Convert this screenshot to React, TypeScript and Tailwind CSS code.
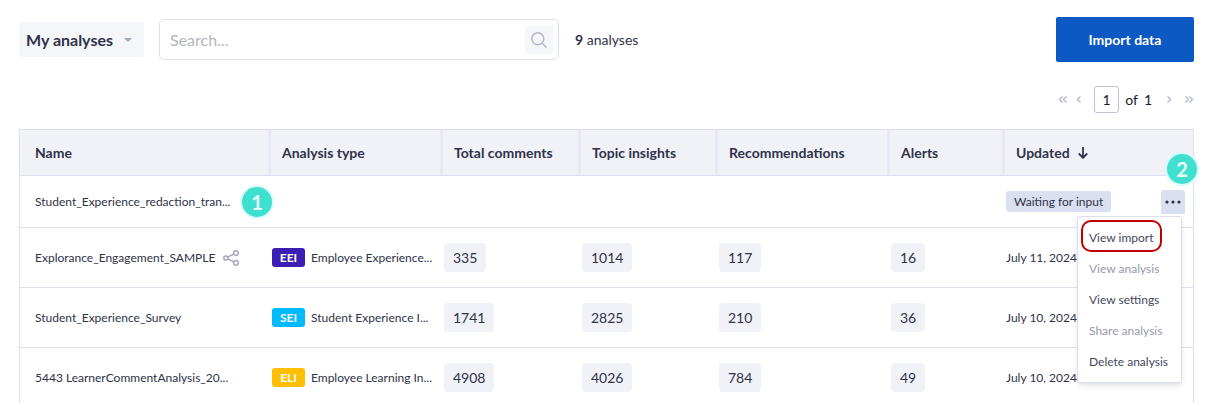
import type { ReactNode } from "react";

type Analysis = {
  name: string;
  shared?: boolean;
  type: { code: string; label: string; color: string };
  counts: number[];
  updated: string;
};

const analyses: Analysis[] = [
  {
    name: "Explorance_Engagement_SAMPLE",
    shared: true,
    type: {
      code: "EEI",
      label: "Employee Experience...",
      color: "bg-[#3b1fb5]",
    },
    counts: [335, 1014, 117, 16],
    updated: "July 11, 2024",
  },
  {
    name: "Student_Experience_Survey",
    type: {
      code: "SEI",
      label: "Student Experience I...",
      color: "bg-[#00baff]",
    },
    counts: [1741, 2825, 210, 36],
    updated: "July 10, 2024",
  },
  {
    name: "5443 LearnerCommentAnalysis_20...",
    type: {
      code: "ELI",
      label: "Employee Learning In...",
      color: "bg-[#ffbe00]",
    },
    counts: [4908, 4026, 784, 49],
    updated: "July 10, 2024",
  },
];

const columns = [
  { title: "Name", width: "w-[252px]" },
  { title: "Analysis type", width: "w-[172px]" },
  { title: "Total comments", width: "w-[138px]" },
  { title: "Topic insights", width: "w-[137px]" },
  { title: "Recommendations", width: "w-[172px]" },
  { title: "Alerts", width: "w-[115px]" },
  { title: "Updated", width: "w-[187px]" },
];

const menuItems = [
  { label: "View import", disabled: false, highlighted: true },
  { label: "View analysis", disabled: true },
  { label: "View settings", disabled: false },
  { label: "Share analysis", disabled: true },
  { label: "Delete analysis", disabled: false },
];

export default function App() {
  return (
    <main className="h-screen overflow-hidden bg-white pt-[17px] pr-[18px] pl-[19px] font-['Lato','Liberation_Sans',sans-serif] text-[#2f3249]">
      <Toolbar />
      <Pagination />
      <AnalysesTable />
    </main>
  );
}

function Toolbar() {
  return (
    <header className="flex items-center">
      <div className="relative">
        <select
          aria-label="Analyses filter"
          className="h-[35px] w-[125px] appearance-none rounded-xs bg-[#f5f6fa] pl-[7px] text-base font-bold"
        >
          <option>My analyses</option>
        </select>
        <svg
          viewBox="0 0 8 4"
          className="pointer-events-none absolute top-4 right-3 h-1 w-2 fill-[#a3a7bd]"
        >
          <path d="M0 0h8L4 4z" />
        </svg>
      </div>

      <form
        role="search"
        className="ml-[15px] flex h-[41px] w-[400px] items-center rounded-[5px] border border-[#dcdff0] pr-[5px] pl-2.5"
      >
        <input
          type="text"
          aria-label="Search analyses"
          placeholder="Search..."
          className="min-w-0 flex-1 text-base outline-none placeholder:text-[#b3b5ba]"
        />
        <button
          type="button"
          aria-label="Search"
          className="flex size-7 items-center justify-center rounded-xs bg-[#f5f6fa]"
        >
          <svg
            viewBox="0 0 16 16"
            className="size-4 fill-none stroke-[#b4b7c6] stroke-[1.5]"
          >
            <circle cx="6.8" cy="6.8" r="6" />
            <path d="M11 11l4.5 4.5" />
          </svg>
        </button>
      </form>

      <p className="ml-4 text-sm">
        <b>9</b> analyses
      </p>

      <button
        type="button"
        className="ml-auto h-[45px] w-[138px] rounded-xs bg-[#0c59c4] text-sm font-bold text-white"
      >
        Import data
      </button>
    </header>
  );
}

function Pagination() {
  return (
    <nav
      aria-label="Pagination"
      className="mt-6 flex items-center justify-end text-sm text-[#16182b]"
    >
      <PageButton
        label="First page"
        path="M4.5 1.5L1.5 4.5L4.5 7.5M8.5 1.5L5.5 4.5L8.5 7.5"
      />
      <PageButton
        label="Previous page"
        path="M4.5 1.5L1.5 4.5L4.5 7.5"
        className="ml-2"
      />
      <input
        aria-label="Page"
        defaultValue="1"
        className="ml-2 h-[27px] w-[25px] rounded-[3px] border border-[#bfc2cf] text-center text-sm"
      />
      <span className="ml-1.5">of</span>
      <span className="ml-1.5">1</span>
      <PageButton
        label="Next page"
        path="M1.5 1.5L4.5 4.5L1.5 7.5"
        className="ml-3.5"
      />
      <PageButton
        label="Last page"
        path="M1.5 1.5L4.5 4.5L1.5 7.5M5.5 1.5L8.5 4.5L5.5 7.5"
        className="ml-2"
      />
    </nav>
  );
}

type PageButtonProps = {
  label: string;
  path: string;
  className?: string;
};

function PageButton({ label, path, className = "" }: PageButtonProps) {
  return (
    <button type="button" aria-label={label} className={className}>
      <svg
        viewBox="0 0 10 9"
        className="h-[9px] w-2.5 fill-none stroke-[#b1b4cb] stroke-[1.3]"
      >
        <path d={path} />
      </svg>
    </button>
  );
}

function AnalysesTable() {
  return (
    <div className="mt-4 border border-[#dcdff0]">
      <table className="w-full table-fixed border-separate border-spacing-0 text-left">
        <thead>
          <tr>
            {columns.map((column, index) => (
              <th
                key={column.title}
                className={`h-[46px] border-b border-[#dcdff0] bg-[#f1f2f8] p-0 text-sm font-bold ${column.width}`}
              >
                <div
                  className={`flex h-[45px] items-center ${
                    index === 0 ? "pl-[15px]" : "pl-2.5"
                  } ${
                    index < columns.length - 1
                      ? "mr-px border-r-3 border-[#e5eaf5]"
                      : ""
                  }`}
                >
                  {column.title}
                  {column.title === "Updated" && <SortArrow />}
                </div>
              </th>
            ))}
          </tr>
        </thead>
        <tbody>
          <PendingRow />
          {analyses.map((analysis) => (
            <AnalysisRow key={analysis.name} analysis={analysis} />
          ))}
        </tbody>
      </table>
    </div>
  );
}

function SortArrow() {
  return (
    <svg
      viewBox="0 0 10 12"
      className="ml-2 h-3 w-2.5 fill-none stroke-current stroke-[1.8]"
    >
      <path d="M5 0v11M0.8 6.5L5 10.8L9.2 6.5" />
    </svg>
  );
}

const cell = "border-b border-[#dcdff0] p-0 text-xs";

function PendingRow() {
  return (
    <tr>
      <td className={`relative h-13 pl-[15px] ${cell}`}>
        Student_Experience_redaction_tran...
        <StepMarker className="top-[11px] right-0">1</StepMarker>
      </td>
      <td className={cell} />
      <td className={cell} />
      <td className={cell} />
      <td className={cell} />
      <td className={cell} />
      <td className={`relative ${cell}`}>
        <div className="flex items-center justify-between pr-2">
          <span className="rounded-[3px] bg-[#dbe0f0] px-2 leading-[21px]">
            Waiting for input
          </span>
          <button
            type="button"
            aria-label="More actions"
            className="flex size-6 items-center justify-center rounded-xs bg-[#dbe0f0]"
          >
            <svg viewBox="0 0 16 4" className="h-1 w-4 fill-[#2f3249]">
              <circle cx="2" cy="2" r="1.6" />
              <circle cx="8" cy="2" r="1.6" />
              <circle cx="14" cy="2" r="1.6" />
            </svg>
          </button>
        </div>
        <StepMarker className="-top-[22px] -right-1">2</StepMarker>
        <ActionMenu />
      </td>
    </tr>
  );
}

function AnalysisRow({ analysis }: { analysis: Analysis }) {
  const { name, shared, type, counts, updated } = analysis;

  return (
    <tr>
      <td className={`h-15 pl-[15px] ${cell}`}>
        <div className="flex items-center gap-2">
          {name}
          {shared && <ShareIcon />}
        </div>
      </td>
      <td className={cell}>
        <div className="flex items-center gap-1.5 whitespace-nowrap">
          <span
            className={`w-[33px] rounded-[3px] text-center leading-[19px] font-bold text-white ${type.color}`}
          >
            {type.code}
          </span>
          {type.label}
        </div>
      </td>
      {counts.map((count, index) => (
        <td key={index} className={cell}>
          <span className="inline-block rounded bg-[#f1f2f8] px-[9px] text-sm leading-[29px]">
            {count}
          </span>
        </td>
      ))}
      <td className={cell}>{updated}</td>
    </tr>
  );
}

function ShareIcon() {
  return (
    <svg
      aria-label="Shared"
      viewBox="0 0 16 16"
      className="size-4 fill-none stroke-[#a3a7bd] stroke-[1.5]"
    >
      <circle cx="2.8" cy="8" r="2" />
      <circle cx="12.9" cy="3.1" r="2.3" />
      <circle cx="12.9" cy="12.9" r="2.3" />
      <path d="M4.7 7.1L10.8 4.1M4.7 8.9L10.8 11.9" />
    </svg>
  );
}

type StepMarkerProps = {
  className: string;
  children: ReactNode;
};

function StepMarker({ className, children }: StepMarkerProps) {
  return (
    <span
      className={`absolute z-20 flex size-[30px] items-center justify-center rounded-full bg-[#40e0d0] font-['Lato',sans-serif] text-xl font-bold text-[#e8fffc] ring-2 ring-[#d9fbfb] ${className}`}
    >
      {children}
    </span>
  );
}

function ActionMenu() {
  return (
    <ul className="absolute top-10 right-[11px] z-10 w-[105px] rounded-xs border border-[#dcdff0] bg-white py-[5px] text-[#44475c] shadow-md shadow-gray-500/15">
      {menuItems.map((item) => (
        <li key={item.label} className="relative">
          {item.highlighted && (
            <span className="pointer-events-none absolute -top-0.5 left-[3px] h-8 w-[81px] rounded-[10px] border-2 border-[#c00000]" />
          )}
          <button
            type="button"
            disabled={item.disabled}
            className="block h-[31px] pl-[11px] text-left whitespace-nowrap disabled:text-[#9799a8]"
          >
            {item.label}
          </button>
        </li>
      ))}
    </ul>
  );
}
